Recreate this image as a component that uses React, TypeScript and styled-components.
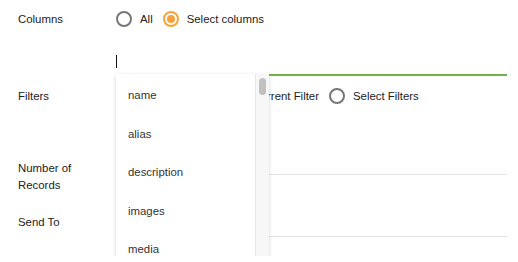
import React from 'react';
import styled, { createGlobalStyle } from 'styled-components';

const columns = ['name', 'alias', 'description', 'images', 'media'];

export default function App() {
  return (
    <>
      <GlobalStyle />
      <Form>
        <Row $height={38} $align="center">
          <Label>Columns</Label>
          <Options>
            <Option>
              <Radio />
              All
            </Option>
            <Option>
              <Radio $checked />
              Select columns
            </Option>
          </Options>
        </Row>

        <Row $height={38} $align="flex-end">
          <Label />
          <FieldWrap>
            <Field $focused>
              <Caret />
            </Field>
            <Menu>
              <MenuList>
                {columns.map((c) => (
                  <MenuItem key={c}>{c}</MenuItem>
                ))}
              </MenuList>
              <ScrollTrack>
                <ScrollThumb />
              </ScrollTrack>
            </Menu>
          </FieldWrap>
        </Row>

        <Row $height={40} $align="center">
          <Label>Filters</Label>
          <Options>
            <Option>
              <Radio />
              No Filters Used
            </Option>
            <Option>
              <Radio />
              Current Filter
            </Option>
            <Option>
              <Radio />
              Select Filters
            </Option>
          </Options>
        </Row>

        <Row $height={44} $align="flex-start" $top={34}>
          <Label $pad={10}>Number of Records</Label>
          <Field />
        </Row>

        <Row $height={44} $align="flex-start" $top={18}>
          <Label $pad={2}>Send To</Label>
          <Field />
        </Row>
      </Form>
    </>
  );
}

const GlobalStyle = createGlobalStyle`
  body {
    margin: 0;
    background: #fff;
    font-family: "Liberation Sans", Arial, sans-serif;
    font-size: 11.4px;
    color: #222;
  }
`;

const Form = styled.div`
  width: 507px;
  box-sizing: border-box;
  padding-left: 18px;
`;

const Row = styled.div<{ $height: number; $align: string; $top?: number }>`
  display: flex;
  align-items: ${(p) => p.$align};
  min-height: ${(p) => p.$height}px;
  margin-top: ${(p) => p.$top ?? 0}px;
`;

const Label = styled.div<{ $pad?: number }>`
  flex: 0 0 98px;
  width: 98px;
  line-height: 17px;
  padding-top: ${(p) => p.$pad ?? 0}px;
  padding-right: 20px;
  box-sizing: border-box;
`;

const Options = styled.div`
  display: flex;
  align-items: center;
  gap: 10px;
`;

const Option = styled.label`
  display: flex;
  align-items: center;
  gap: 8px;
  line-height: 16px;
`;

const Radio = styled.span<{ $checked?: boolean }>`
  position: relative;
  width: 16px;
  height: 16px;
  box-sizing: border-box;
  border-radius: 50%;
  border: 2px solid ${(p) => (p.$checked ? '#f9a23b' : '#777')};

  &::after {
    content: '';
    display: ${(p) => (p.$checked ? 'block' : 'none')};
    position: absolute;
    left: 2px;
    top: 2px;
    width: 8px;
    height: 8px;
    border-radius: 50%;
    background: #f9a23b;
  }
`;

const FieldWrap = styled.div`
  position: relative;
  flex: 1;
`;

const Field = styled.div<{ $focused?: boolean }>`
  flex: 1;
  height: 24px;
  display: flex;
  align-items: center;
  border-bottom: ${(p) => (p.$focused ? '2px solid #72b343' : '1px solid #e3e3e3')};
`;

const Caret = styled.span`
  width: 1px;
  height: 13px;
  margin-top: -2px;
  background: #111;
`;

const Menu = styled.div`
  position: absolute;
  left: 0;
  top: 24px;
  width: 153px;
  height: 183px;
  display: flex;
  background: #fff;
  box-shadow: 0 1px 4px rgba(0, 0, 0, 0.16);
  overflow: hidden;
  z-index: 2;
`;

const MenuList = styled.ul`
  flex: 1;
  margin: 0;
  padding: 2px 0 0;
  list-style: none;
`;

const MenuItem = styled.li`
  height: 38.5px;
  line-height: 38.5px;
  padding-left: 12px;
  color: #333;
`;

const ScrollTrack = styled.div`
  flex: 0 0 14px;
  box-sizing: border-box;
  background: #f7f7f7;
  border-left: 1px solid #e6e6e6;
  padding: 4px 0 0 3px;
`;

const ScrollThumb = styled.div`
  width: 7px;
  height: 17px;
  border-radius: 4px;
  background: #c1c1c1;
`;
